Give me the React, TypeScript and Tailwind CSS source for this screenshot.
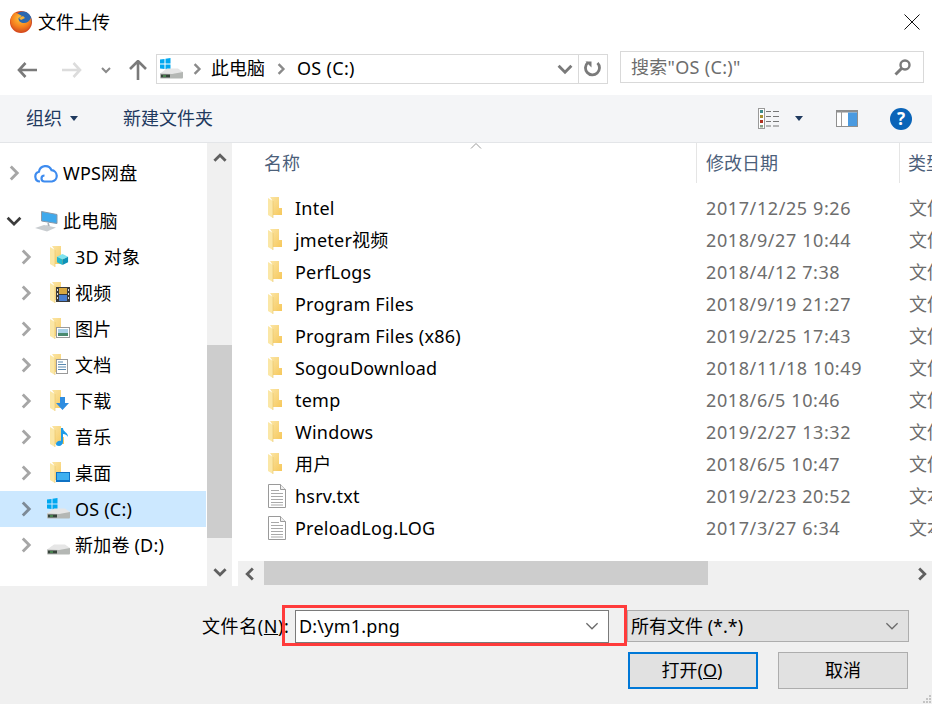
import type { ReactNode } from 'react';

const FONT = "font-['Noto_Sans','Noto_Sans_CJK_SC',sans-serif]";

function Firefox() {
  return (
    <svg width="24" height="24" viewBox="0 0 24 24" className="shrink-0">
      <defs>
        <radialGradient id="fx" cx="0.5" cy="0.3" r="0.8">
          <stop offset="0" stopColor="#ffcb3c" />
          <stop offset="0.55" stopColor="#f57f1e" />
          <stop offset="1" stopColor="#c83f1e" />
        </radialGradient>
      </defs>
      <circle cx="12" cy="12" r="11" fill="#d8491c" />
      <circle cx="14" cy="10" r="8.5" fill="#2b68b0" />
      <path d="M5 3C8 2 10 5 13 6L9.5 8C9 11 12 13 15 13C18 13 20.5 11 22 8C23.5 16 18 22.5 11 22C5.5 21.5 1.5 16 1.5 11C1.5 8 3 5 5 3Z" fill="url(#fx)" />
      <path d="M10 8L14 6L16 8L12 10Z" fill="#f9b233" />
    </svg>
  );
}

function Chevron({ dir, color = '#a6a6a6', size = 10, width = 2.4 }: { dir: 'left' | 'right' | 'up' | 'down'; color?: string; size?: number; width?: number }) {
  const d = {
    right: 'M3 1l4 4-4 4',
    left: 'M7 1L3 5l4 4',
    up: 'M1 7l4-4 4 4',
    down: 'M1 3l4 4 4-4',
  }[dir];
  return (
    <svg width={size} height={size} viewBox="0 0 10 10" className="shrink-0">
      <path d={d} fill="none" stroke={color} strokeWidth={width} />
    </svg>
  );
}

function Caret() {
  return (
    <svg width="8" height="5" viewBox="0 0 8 5" className="shrink-0">
      <path d="M0 0h8L4 5z" fill="#1f3a5f" />
    </svg>
  );
}

function Drive({ windows = false }: { windows?: boolean }) {
  return (
    <svg width="24" height="22" viewBox="0 0 24 22" className="shrink-0">
      {windows && (
        <path d="M0 1.500L4.500 1V5.500H0ZM5.500 .8L10.500 0V5.500H5.500ZM0 6.500H4.500V11L0 10.500ZM5.500 6.500H10.500V12L5.500 11.200Z" fill="#00a8f0" />
      )}
      <path d="M0 15.500L7 10.500H18L23 14V16.500H0Z" fill="#e6e6e6" />
      <path d="M0 15.500L12 16L23 14V19.500C23 20 22.500 20.500 22 20.500H1C.5 20.500 0 20 0 19.500Z" fill="#b4b7b4" />
      <rect x="1" y="16.500" width="9" height="3" fill="#36443a" />
      <rect x="3" y="17.500" width="3" height="1" fill="#58c060" />
    </svg>
  );
}

function FolderShape({ overlay }: { overlay?: ReactNode }) {
  return (
    <span className="relative flex h-[22px] w-[24px] shrink-0">
      <svg width="15" height="21" viewBox="0 0 15 21">
        <defs>
          <linearGradient id="fold" x1="0" x2="1" y1="0" y2="1">
            <stop offset="0" stopColor="#fbe5a4" />
            <stop offset="1" stopColor="#f6c85c" />
          </linearGradient>
        </defs>
        <path d="M2 0H11V11H14V18H4V3Z" fill="url(#fold)" />
        <path d="M0 1L5 4V21L0 18Z" fill="#fbe7a6" />
        <path d="M5 4V21" stroke="#e8c264" strokeWidth=".6" />
      </svg>
      {overlay && <span className="absolute bottom-[2px] left-[6px] flex">{overlay}</span>}
    </span>
  );
}

function Doc() {
  return (
    <svg width="18" height="24" viewBox="0 0 18 24" className="shrink-0">
      <path d="M.5.5h12l5 5v18H.5z" fill="#fff" stroke="#9a9a9a" />
      <path d="M12.500.5v5h5" fill="#eee" stroke="#9a9a9a" />
      <path d="M3 6.500h8M3 9.500h12M3 12.500h12M3 15.500h12M3 18.500h12M3 21h12" stroke="#a9a9a9" />
    </svg>
  );
}

const overlays: Record<string, ReactNode> = {
  cube: (
    <svg width="13" height="13" viewBox="0 0 14 14">
      <path d="M7 1l6 3-6 3-6-3z" fill="#7fe3ee" />
      <path d="M1 4l6 3v6l-6-3z" fill="#21b8d0" />
      <path d="M13 4L7 7v6l6-3z" fill="#0d92b8" />
    </svg>
  ),
  film: (
    <svg width="14" height="15" viewBox="0 0 14 15">
      <rect width="14" height="15" fill="#3a3a3a" />
      <rect x="3" y="1" width="8" height="6" fill="#d8a840" />
      <rect x="3" y="8" width="8" height="6" fill="#4a7fd0" />
      <path d="M1 2h1v2H1zM1 6h1v2H1zM1 10h1v2H1zM12 2h1v2h-1zM12 6h1v2h-1zM12 10h1v2h-1z" fill="#ddd" />
    </svg>
  ),
  picture: (
    <svg width="14" height="11" viewBox="0 0 14 11">
      <rect x=".5" y=".5" width="13" height="10" fill="#fff" stroke="#9a9a9a" />
      <rect x="2" y="2" width="10" height="4" fill="#a8d0e8" />
      <rect x="2" y="6" width="10" height="3" fill="#4a8a70" />
    </svg>
  ),
  doc: (
    <svg width="12" height="15" viewBox="0 0 12 15">
      <rect x=".5" y=".5" width="11" height="14" fill="#fff" stroke="#9a9a9a" />
      <path d="M2 3h5M2 5.500h8M2 8h8M2 10.500h8" stroke="#5a8ab0" />
    </svg>
  ),
  down: (
    <svg width="13" height="14" viewBox="0 0 13 14">
      <path d="M4 1h5v6h4l-6.500 7L0 7h4z" fill="#2f8de0" />
    </svg>
  ),
  note: (
    <svg width="13" height="18" viewBox="0 0 13 18">
      <path d="M5 0h2c0 4 5 4 5 9-1-2-3-3-5-3v8c0 2-2 4-4 4s-3-1-3-2c0-2 3-4 5-3z" fill="#1c9be8" />
    </svg>
  ),
  desktop: (
    <svg width="14" height="10" viewBox="0 0 14 10">
      <rect width="14" height="10" fill="#0f72c4" />
      <rect x="1" y="1" width="12" height="7" fill="#3fb0f0" />
    </svg>
  ),
};

function TreeRow({ label, level, icon, open, selected, className = '' }: { label: string; level: 0 | 1; icon: ReactNode; open?: boolean; selected?: boolean; className?: string }) {
  return (
    <div className={`flex h-[36px] shrink-0 items-center ${selected ? 'bg-[#cce8ff]' : ''} ${className}`}>
      <span className={`flex shrink-0 justify-center ${level === 0 ? 'w-[28px]' : 'w-[52px]'}`}>
        {open ? <Chevron dir="down" color="#3c3c3c" size={16} width={1.7} /> : <Chevron dir="right" color={selected ? '#7d8a96' : '#a6a6a6'} size={16} width={1.8} />}
      </span>
      <span className={level === 0 ? 'ml-[6px] w-[29px]' : '-ml-[2px] w-[25px]'}>{icon}</span>
      <span className="text-[18px] leading-none tracking-[0.2px] text-black">{label}</span>
    </div>
  );
}

const files = [
  ['Intel', '2017/12/25 9:26', '文件'],
  ['jmeter视频', '2018/9/27 10:44', '文件'],
  ['PerfLogs', '2018/4/12 7:38', '文件'],
  ['Program Files', '2018/9/19 21:27', '文件'],
  ['Program Files (x86)', '2019/2/25 17:43', '文件'],
  ['SogouDownload', '2018/11/18 10:49', '文件'],
  ['temp', '2018/6/5 10:46', '文件'],
  ['Windows', '2019/2/27 13:32', '文件'],
  ['用户', '2018/6/5 10:47', '文件'],
  ['hsrv.txt', '2019/2/23 20:52', '文本'],
  ['PreloadLog.LOG', '2017/3/27 6:34', '文本'],
];

export default function App() {
  return (
    <div className={`${FONT} flex h-[704px] w-[932px] flex-col overflow-hidden bg-white`}>
      {/* Title bar */}
      <div className="flex h-[44px] shrink-0 items-center pl-[9px] pr-[12px]">
        <Firefox />
        <span className="ml-[5px] text-[18px] text-black">文件上传</span>
        <svg width="16" height="16" viewBox="0 0 16 16" className="ml-auto">
          <path d="M.5.5l15 15M15.500.5l-15 15" stroke="#111" fill="none" />
        </svg>
      </div>

      {/* Nav row */}
      <div className="flex h-[51px] shrink-0 items-center">
        <svg width="20" height="16" viewBox="0 0 20 16" className="ml-[17px]">
          <path d="M8.500 1L2 8l6.500 7M2 8h18" fill="none" stroke="#7a7a7a" strokeWidth="2.600" />
        </svg>
        <svg width="20" height="16" viewBox="0 0 20 16" className="ml-[25px]">
          <path d="M11.500 1L18 8l-6.500 7M18 8H0" fill="none" stroke="#dcdcdc" strokeWidth="2.600" />
        </svg>
        <span className="ml-[19px]"><Chevron dir="down" color="#8a8a8a" size={10} width={2} /></span>
        <svg width="18" height="20" viewBox="0 0 18 20" className="ml-[18px]">
          <path d="M1 9l8-8 8 8M9 1v19" fill="none" stroke="#7a7a7a" strokeWidth="2.600" />
        </svg>
        <div className="ml-[9px] mt-[-2px] flex h-[30px] w-[452px] items-center border border-[#d9d9d9]">
          <span className="ml-[3px] w-[31px]"><Drive windows /></span>
          <Chevron dir="right" color="#8a8a8a" size={12} width={2} />
          <span className="ml-[8px] text-[18px] text-black">此电脑</span>
          <span className="ml-[10px]"><Chevron dir="right" color="#8a8a8a" size={12} width={2} /></span>
          <span className="ml-[10px] text-[18px] tracking-[0.3px] text-black">OS (C:)</span>
          <span className="ml-auto mr-[5px]"><Chevron dir="down" color="#7a7a7a" size={16} width={1.8} /></span>
          <div className="flex h-full w-[29px] items-center justify-center border-l border-[#d9d9d9]">
            <svg width="18" height="18" viewBox="0 0 18 18">
              <path d="M4 2.500a7 7 0 1 0 9.500.5" fill="none" stroke="#7a7a7a" strokeWidth="2.800" />
              <path d="M1.500 1.500h6v6z" fill="#7a7a7a" />
            </svg>
          </div>
        </div>
        <div className="ml-[12px] mt-[-5px] flex h-[32px] w-[304px] items-center border border-[#d9d9d9] pl-[10px] pr-[12px]">
          <span className="text-[18px] tracking-[0.3px] text-[#6d6d6d]">搜索"OS (C:)"</span>
          <svg width="17" height="17" viewBox="0 0 17 17" className="ml-auto">
            <circle cx="11" cy="6" r="4.500" fill="none" stroke="#7a7a7a" strokeWidth="2.400" />
            <path d="M7.500 9.500L1.500 15.500" stroke="#7a7a7a" strokeWidth="3" />
          </svg>
        </div>
      </div>

      {/* Toolbar */}
      <div className="flex h-[48px] shrink-0 items-center border-b border-[#e3e5e8] bg-[#f4f5f7] pl-[26px] text-[18px] text-[#1f3a5f]">
        <span>组织</span>
        <span className="ml-[8px]"><Caret /></span>
        <span className="ml-[45px]">新建文件夹</span>
        <svg width="22" height="21" viewBox="0 0 22 21" className="ml-auto">
          <rect x=".5" y=".5" width="6" height="20" fill="#fff" stroke="#9a9a9a" />
          <rect x="2" y="2" width="3" height="3" fill="#3a8a8a" />
          <rect x="2" y="7" width="3" height="3" fill="#a89030" />
          <rect x="2" y="12" width="3" height="3" fill="#b03020" />
          <rect x="2" y="17" width="3" height="2.500" fill="#88a088" />
          <path d="M8 3.500h5M15 3.500h6M8 8.500h5M15 8.500h6M8 13.500h5M15 13.500h6M8 18h5M15 18h6" stroke="#777" />
        </svg>
        <span className="ml-[15px]"><Caret /></span>
        <svg width="22" height="17" viewBox="0 0 22 17" className="ml-[33px]">
          <rect x=".5" y=".5" width="21" height="16" fill="#fff" stroke="#8f8f8f" />
          <rect x="1" y="1" width="20" height="1.500" fill="#8f8f8f" />
          <rect x="12" y="2.500" width="9" height="13.500" fill="#4a9ae0" />
          <path d="M5.500 1v15" stroke="#9a9a9a" />
        </svg>
        <span className="ml-[32px] mr-[20px] flex h-[22px] w-[22px] items-center justify-center rounded-full bg-[#0a64b8] text-[17px] font-bold text-white">?</span>
      </div>

      {/* Main */}
      <div className="flex h-[443px] shrink-0">
        {/* Tree */}
        <div className="w-[206px] shrink-0 overflow-hidden pt-[12px]">
          <TreeRow
            label="WPS网盘"
            level={0}
            icon={
              <svg width="24" height="19" viewBox="0 0 24 19">
                <path d="M6 17.500a5 5 0 0 1-1-9.800 6.500 6.500 0 0 1 12.500-1.500A5.700 5.700 0 0 1 18 17.500H10.500a3 3 0 0 1 0-6" fill="none" stroke="#3d8bef" strokeWidth="2.200" />
              </svg>
            }
            className="mb-[12px]"
          />
          <TreeRow
            label="此电脑"
            level={0}
            open
            icon={
              <svg width="24" height="21" viewBox="0 0 24 21">
                <path d="M7.500 .5L23 3.500V12.500L7.500 10Z" fill="#3fa9ec" stroke="#8a99a8" />
                <path d="M14 12L15 15L12 15.500" fill="none" stroke="#a9b0b6" strokeWidth="1.500" />
                <path d="M1 17L10 14L22 16.500L13 20.500Z" fill="#c9cdd0" />
              </svg>
            }
          />
          <TreeRow label="3D 对象" level={1} icon={<FolderShape overlay={overlays.cube} />} />
          <TreeRow label="视频" level={1} icon={<FolderShape overlay={overlays.film} />} />
          <TreeRow label="图片" level={1} icon={<FolderShape overlay={overlays.picture} />} />
          <TreeRow label="文档" level={1} icon={<FolderShape overlay={overlays.doc} />} />
          <TreeRow label="下载" level={1} icon={<FolderShape overlay={overlays.down} />} />
          <TreeRow label="音乐" level={1} icon={<FolderShape overlay={overlays.note} />} />
          <TreeRow label="桌面" level={1} icon={<FolderShape overlay={overlays.desktop} />} />
          <TreeRow label="OS (C:)" level={1} selected icon={<span className="-ml-[3px] block"><Drive windows /></span>} />
          <TreeRow label="新加卷 (D:)" level={1} icon={<span className="-ml-[3px] block"><Drive /></span>} />
        </div>

        {/* Tree scrollbar */}
        <div className="ml-px flex w-[25px] shrink-0 flex-col items-center bg-[#f0f0f0]">
          <span className="mt-[8px]"><Chevron dir="up" color="#606060" size={14} width={2} /></span>
          <div className="mt-[180px] h-[193px] w-full bg-[#cdcdcd]" />
          <span className="mt-[27px]"><Chevron dir="down" color="#606060" size={14} width={2} /></span>
        </div>

        {/* File list */}
        <div className="ml-[6px] flex min-w-0 flex-1 flex-col">
          <div className="flex h-[40px] shrink-0 text-[18px] text-[#4c607a]">
            <div className="relative flex w-[458px] shrink-0 items-center pl-[26px]">
              名称
              <svg width="12" height="6" viewBox="0 0 12 6" className="absolute left-[232px] top-0">
                <path d="M1 5.500l5-5 5 5" fill="none" stroke="#9a9a9a" />
              </svg>
            </div>
            <div className="flex w-[203px] shrink-0 items-center border-l border-[#e5e5e5] pl-[9px]">修改日期</div>
            <div className="flex flex-1 items-center overflow-hidden whitespace-nowrap border-l border-[#e5e5e5] pl-[8px]">类型</div>
          </div>
          <div className="flex-1 overflow-hidden pt-[9px]">
            {files.map(([name, date, type], i) => (
              <div key={name} className="flex h-[32px] items-center">
                <span className="ml-[30px] flex w-[27px] shrink-0">{i < 9 ? <FolderShape /> : <Doc />}</span>
                <span className="w-[401px] shrink-0 text-[18px] leading-none tracking-[0.22px] text-black">{name}</span>
                <span className="w-[203px] shrink-0 pl-[10px] text-[18px] leading-none tracking-[0.6px] text-[#6d6d6d]">{date}</span>
                <span className="overflow-hidden whitespace-nowrap pl-[10px] text-[18px] leading-none text-[#6d6d6d]">{type}</span>
              </div>
            ))}
          </div>
          <div className="flex h-[25px] shrink-0 items-center bg-[#f0f0f0]">
            <span className="ml-[5px] w-[21px]"><Chevron dir="left" color="#606060" size={14} width={2} /></span>
            <div className="h-[24px] w-[444px] self-start bg-[#cdcdcd]" />
            <span className="ml-auto mr-[3px]"><Chevron dir="right" color="#606060" size={14} width={2} /></span>
          </div>
        </div>
      </div>

      {/* Bottom */}
      <div className="relative flex flex-1 flex-col bg-[#f0f0f0] text-[18px] text-black">
        <div className="mt-[24px] flex h-[32px] items-center pl-[202px]">
          <span className="w-[93px] whitespace-nowrap tracking-[0.6px]">文件名(<span className="underline">N</span>):</span>
          <div className="flex h-[33px] w-[314px] items-center border border-[#7a7a7a] bg-white pl-[3px] pr-[9px]">
            <span className="tracking-[0.2px]">D:\ym1.png</span>
            <span className="ml-auto"><Chevron dir="down" color="#6a6a6a" size={14} width={.9} /></span>
          </div>
          <div className="ml-[18px] flex h-[32px] w-[282px] items-center border border-[#adadad] bg-[#e1e1e1] pl-[3px] pr-[9px]">
            <span>所有文件 (*.*)</span>
            <span className="ml-auto"><Chevron dir="down" color="#6a6a6a" size={14} width={.9} /></span>
          </div>
        </div>
        <div className="mt-[10px] flex pl-[628px]">
          <button className="flex h-[37px] w-[130px] items-center justify-center border-2 border-[#0078d7] bg-[#e1e1e1] pr-[2px]">打开(<span className="underline">O</span>)</button>
          <button className="ml-[20px] flex h-[37px] w-[130px] items-center justify-center border border-[#adadad] bg-[#e1e1e1]">取消</button>
        </div>
        {/* red annotation */}
        <div className="absolute left-[282px] top-[19px] h-[41px] w-[345px] border-[3px] border-[#ff3b3b]" />
        <svg width="10" height="10" viewBox="0 0 10 10" className="absolute bottom-0 right-0">
          <path d="M7 1h2v2H7zM4 4h2v2H4zM7 4h2v2H7zM1 7h2v2H1zM4 7h2v2H4zM7 7h2v2H7z" fill="#c4c4c4" />
        </svg>
      </div>
    </div>
  );
}
